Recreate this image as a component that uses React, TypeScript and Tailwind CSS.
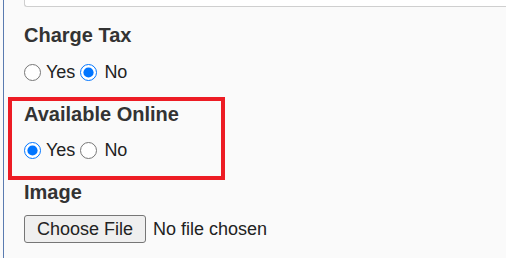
import React from "react";

function RadioRow({ name, value }: { name: string; value: "yes" | "no" }) {
  return (
    <div className="flex h-6 items-center text-[18px] text-[#222]">
      <input
        type="radio"
        name={name}
        defaultChecked={value === "yes"}
        className="m-0 h-[17px] w-[17px] accent-[#0075ff]"
      />
      <span className="ml-[5px]">Yes</span>
      <input
        type="radio"
        name={name}
        defaultChecked={value === "no"}
        className="m-0 ml-[5px] h-[17px] w-[17px] accent-[#0075ff]"
      />
      <span className="ml-[7px]">No</span>
    </div>
  );
}

export default function App() {
  return (
    <div
      className="h-[263px] w-[506px] overflow-hidden bg-white"
      style={{ fontFamily: '"Liberation Sans", Arial, sans-serif' }}
    >
      <div className="h-[258px] bg-[#fafafa] pl-[3px]">
        <div className="h-full border-l border-[#5a7bb0] pl-[20px]">
          <div className="h-[7px] rounded-bl-[3px] border-b border-l border-[#cfcfcf] bg-white" />

          <h3 className="mt-[16px] h-6 text-[20px] font-bold leading-6 text-[#333]">
            Charge Tax
          </h3>
          <div className="mt-[13px]">
            <RadioRow name="tax" value="no" />
          </div>

          <div className="ml-[-16px] mt-[13px] w-[217px] border-[4px] border-[#ed1c24] pb-[14px] pl-[12px] pt-[1px]">
            <h3 className="h-6 text-[20px] font-bold leading-6 text-[#333]">
              Available Online
            </h3>
            <div className="mt-[12px]">
              <RadioRow name="online" value="yes" />
            </div>
          </div>

          <h3 className="h-6 text-[20px] font-bold leading-6 text-[#333]">
            Image
          </h3>
          <div className="mt-[11px] flex items-center text-[18px] text-[#222]">
            <button className="h-[28px] w-[122px] rounded-[3px] border border-[#767676] bg-[#efefef] text-center">
              Choose File
            </button>
            <span className="ml-[7px]">No file chosen</span>
          </div>
        </div>
      </div>
    </div>
  );
}
